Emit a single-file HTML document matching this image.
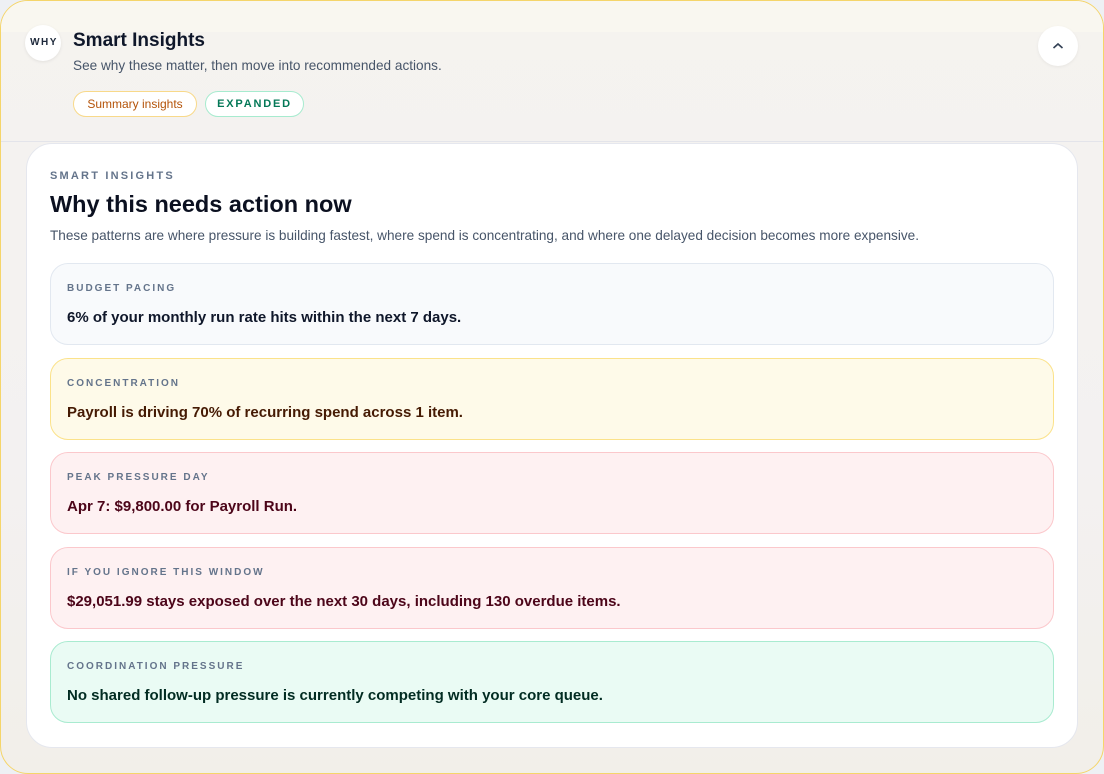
<!DOCTYPE html>
<html><head><meta charset="utf-8"><style>
*{box-sizing:border-box;margin:0;padding:0}
html,body{width:1104px;height:774px;background:#eef0f4;font-family:"Liberation Sans",sans-serif;overflow:hidden}
.outer{position:absolute;left:0;top:0;width:1104px;height:774px;border:1px solid #f5d56a;border-radius:28px;background:linear-gradient(180deg,#f5f3ef 0%,#f3f1f1 60%,#f2efe9 100%);overflow:hidden}
.topband{position:absolute;left:0;top:0;right:0;height:31px;background:#f9f7f0}
.hdrline{position:absolute;left:0;right:0;top:140px;height:1px;background:#e3e4ea}
.why{position:absolute;left:24px;top:24px;width:36px;height:36px;border-radius:50%;background:#fff;box-shadow:0 1px 3px rgba(0,0,0,.08);font-size:10px;font-weight:700;letter-spacing:1.5px;color:#1e293b;text-align:center;line-height:36px;padding-left:2px}
h1{position:absolute;left:72px;top:29px;font-size:19px;font-weight:700;color:#0f172a}
.sub{position:absolute;left:72px;top:57px;font-size:13.6px;color:#475569}
.pill{position:absolute;top:90px;height:26px;border-radius:13px;background:#fff;font-size:12px;line-height:24px;text-align:center}
.p1{left:72px;width:124px;border:1px solid #f8d98a;color:#b45309}
.p2{left:204px;width:99px;border:1px solid #a7ebcf;color:#047857;font-weight:700;letter-spacing:1.8px;font-size:11px}
.btn{position:absolute;left:1037px;top:25px;width:40px;height:40px;border-radius:50%;background:#fff;box-shadow:0 1px 3px rgba(0,0,0,.06)}
.card{position:absolute;left:25px;top:142px;width:1052px;height:605px;background:#fff;border-radius:26px;border:1px solid #e5e7ee}
.eyebrow{position:absolute;left:23px;top:26px;font-size:11px;font-weight:700;letter-spacing:2.2px;color:#64748b}
h2{position:absolute;left:23px;top:47px;font-size:23.5px;font-weight:800;color:#0b1020}
.desc{position:absolute;left:23px;top:84px;font-size:13.6px;color:#475569}
.it{position:absolute;left:23px;width:1004px;height:82px;border-radius:18px;border:1px solid}
.it .l{position:absolute;left:16px;top:19px;font-size:10px;font-weight:700;letter-spacing:2px;color:#64748b}
.it .t{position:absolute;left:16px;top:45px;font-size:15px;font-weight:700}
</style></head><body>
<div class="outer">
<div class="topband"></div>
<div class="hdrline"></div>
<div class="why">WHY</div>
<h1>Smart Insights</h1>
<div class="sub">See why these matter, then move into recommended actions.</div>
<div class="pill p1">Summary insights</div>
<div class="pill p2">EXPANDED</div>
<div class="btn"><svg width="40" height="40"><path d="M15.5 22 L20 18 L24.5 22" fill="none" stroke="#334155" stroke-width="1.6"/></svg></div>
<div class="card">
<div class="eyebrow">SMART INSIGHTS</div>
<h2>Why this needs action now</h2>
<div class="desc">These patterns are where pressure is building fastest, where spend is concentrating, and where one delayed decision becomes more expensive.</div>
<div class="it" style="top:119px;background:#f8fafc;border-color:#e2e8f0"><div class="l">BUDGET PACING</div><div class="t" style="color:#0f172a">6% of your monthly run rate hits within the next 7 days.</div></div>
<div class="it" style="top:214px;background:#fefae9;border-color:#fbe28a"><div class="l">CONCENTRATION</div><div class="t" style="color:#451a03">Payroll is driving 70% of recurring spend across 1 item.</div></div>
<div class="it" style="top:308px;background:#fef1f2;border-color:#fbc8cc"><div class="l">PEAK PRESSURE DAY</div><div class="t" style="color:#4c0519">Apr 7: $9,800.00 for Payroll Run.</div></div>
<div class="it" style="top:403px;background:#fef1f2;border-color:#fbc8cc"><div class="l">IF YOU IGNORE THIS WINDOW</div><div class="t" style="color:#4c0519">$29,051.99 stays exposed over the next 30 days, including 130 overdue items.</div></div>
<div class="it" style="top:497px;background:#eafbf4;border-color:#a9ebd0"><div class="l">COORDINATION PRESSURE</div><div class="t" style="color:#022c22">No shared follow-up pressure is currently competing with your core queue.</div></div>
</div>
</div>
</body></html>
